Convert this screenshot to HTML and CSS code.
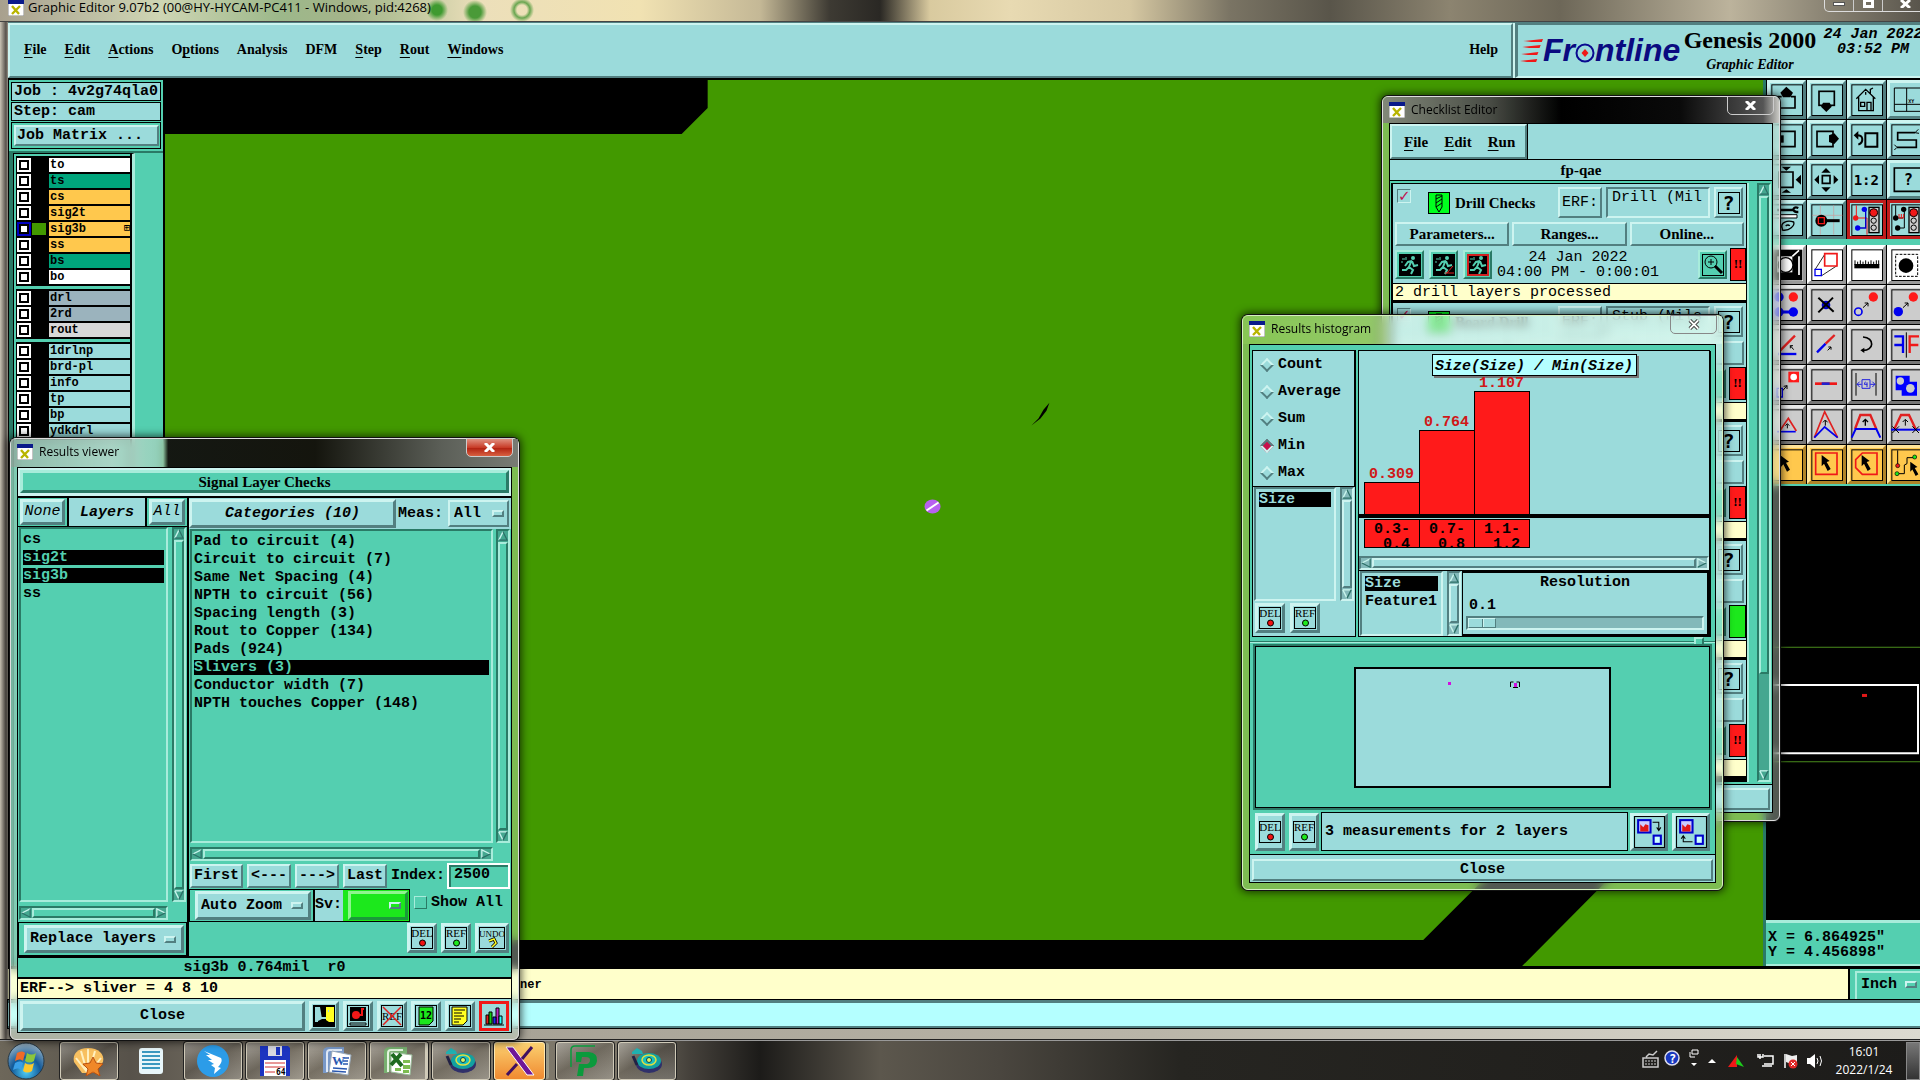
FILE: index.html
```html
<!DOCTYPE html>
<html lang="en">
<head>
<meta charset="utf-8">
<title>Graphic Editor</title>
<link rel="stylesheet" href="styles.css">
</head>
<body>
<svg class="defs" aria-hidden="true">
  <symbol id="xicon" viewBox="0 0 16 16"><rect width="16" height="16" fill="#fff" stroke="#888"/><rect width="16" height="4" fill="#0a1a8a"/><path d="M4 6l7 8M12 6l-8 8" stroke="#b8b400" stroke-width="2.4"/></symbol>
  <symbol id="up" viewBox="0 0 12 12"><path d="M6 1L1 11" stroke="#c8f4ec" stroke-width="1.6" fill="none"/><path d="M6 1l5 10H1" stroke="#2b6f66" stroke-width="1.4" fill="none"/></symbol>
  <symbol id="down" viewBox="0 0 12 12"><path d="M1 1h10" stroke="#c8f4ec" stroke-width="1.6"/><path d="M1 1l5 10" stroke="#c8f4ec" stroke-width="1.6"/><path d="M11 1L6 11" stroke="#2b6f66" stroke-width="1.6"/></symbol>
  <symbol id="left" viewBox="0 0 12 12"><path d="M11 1L1 6" stroke="#c8f4ec" stroke-width="1.6"/><path d="M1 6l10 5V1" stroke="#2b6f66" stroke-width="1.4" fill="none"/></symbol>
  <symbol id="right" viewBox="0 0 12 12"><path d="M11 6L1 1v10" stroke="#c8f4ec" stroke-width="1.6" fill="none"/><path d="M1 11l10-5" stroke="#2b6f66" stroke-width="1.6"/></symbol>
  <symbol id="del" viewBox="0 0 24 24"><rect x="1.500" y="1.500" width="21" height="21" fill="none" stroke="#000"/><circle cx="12.500" cy="17" r="3" fill="#f01010" stroke="#000"/></symbol>
  <symbol id="ref" viewBox="0 0 24 24"><rect x="1.500" y="1.500" width="21" height="21" fill="none" stroke="#000"/><circle cx="12.500" cy="17" r="3" fill="#1ce81c" stroke="#000"/></symbol>
  <symbol id="frame" viewBox="9 9 99 99"><rect x="14.500" y="14.500" width="92" height="92" fill="none" stroke="#000" stroke-width="3"/></symbol>
  <symbol id="drill" viewBox="0 0 22 22"><rect x=".5" y=".5" width="21" height="21" fill="#00ff1e" stroke="#000"/><path d="M8 3h6v12l-3 5-3-5zM8 7l6-3M8 11l6-4M8 15l6-4" fill="none" stroke="#000"/></symbol>
  <symbol id="run" viewBox="0 0 24 24"><rect x="1" y="1" width="22" height="22" fill="#000"/><circle cx="15" cy="5" r="2" fill="#54cfb0"/><path d="M14 8l-4 1-3 4M14 8l2 5 4-1M13 9l-2 5 4 3-2 4M11 14l-3 3H4" stroke="#54cfb0" stroke-width="2" fill="none"/><path d="M4 6h3M8 4v3M3 9h2" stroke="#54cfb0"/></symbol>
  <symbol id="mag" viewBox="0 0 24 24"><rect x="1.500" y="1.500" width="21" height="21" fill="none" stroke="#000"/><circle cx="10" cy="9" r="6" fill="none" stroke="#000"/><path d="M7 9h6M10 6v6" stroke="#000"/><path d="M14 13l7 7" stroke="#000" stroke-width="3"/></symbol>
  <symbol id="arrow" viewBox="0 0 40 50"><path d="M2 0l24 18-9 3 12 21-9 6-11-22-7 8z"/></symbol>
  <symbol id="eye" viewBox="0 0 32 28"><ellipse cx="18" cy="17" rx="13" ry="9" fill="#30306a"/><ellipse cx="18" cy="14" rx="12" ry="8" fill="#12a0a0"/><ellipse cx="18" cy="13" rx="7" ry="5" fill="#18c0c0" stroke="#e0e040" stroke-width="1.500"/><circle cx="18" cy="13" r="2.500" fill="#e0f060" stroke="#045"/><path d="M1 5l5-4 5 3 1 3H1z" fill="#20b0b0"/><path d="M2 9l4 9" stroke="#224" stroke-width="3"/></symbol>
</svg>

<div class="desktop">
  <main class="editor">
    <header class="titlebar">
      <svg width="16" height="16"><use href="#xicon"/></svg>
      <span>Graphic Editor 9.07b2 (00@HY-HYCAM-PC411 - Windows, pid:4268)</span>
      <div class="wctl"><button aria-label="Minimize"><i class="g-min"></i></button><button aria-label="Maximize"><i class="g-max"></i></button><button aria-label="Close window"><svg width="11" height="8" viewBox="0 0 11 8"><path d="M1 0l9 8M10 0L1 8" stroke="#fff" stroke-width="3"/></svg></button></div>
    </header>

    <div class="top">
      <nav class="menubar">
        <button><u>F</u>ile</button><button><u>E</u>dit</button><button><u>A</u>ctions</button><button>O<u>p</u>tions</button><button>Analysis</button><button>DFM</button><button><u>S</u>tep</button><button><u>R</u>out</button><button><u>W</u>indows</button>
        <button class="help">Help</button>
      </nav>
      <section class="brand">
        <div class="logo">
          <svg width="23" height="24" viewBox="0 0 20 24" preserveAspectRatio="none"><path d="M3 2l17-2-1 3H10zM2 8l16-2-1 3H8zM1 15l15-2-1 3H7zM0 22l15-2-1 3H6z" fill="#f01818"/></svg>
          <b>Fr</b><svg width="20" height="24" viewBox="0 0 20 24"><circle cx="10" cy="14" r="8.500" fill="none" stroke="#0a0a90" stroke-width="2"/><path d="M10 10l3.500 4-3.500 4-3.500-4z" fill="#f01818"/></svg><b>ntline</b>
        </div>
        <div class="product"><strong>Genesis 2000</strong><em>Graphic Editor</em></div>
        <div class="date">24 Jan 2022<br>03:52 PM</div>
      </section>
    </div>

    <div class="work">
      <aside class="layers">
        <div class="jobbox">
          <div class="cell">Job : 4v2g74qla0</div>
          <div class="cell">Step: cam</div>
          <div class="matrix"><button class="raised">Job Matrix ...</button></div>
        </div>
        <div class="layerwrap">
          <div class="layercol">
            <ul>
              <li><label><input type="checkbox"><i></i><span class="w">to</span></label></li>
              <li><label><input type="checkbox"><i></i><span class="g">ts</span></label></li>
              <li><label><input type="checkbox"><i></i><span class="o">cs</span></label></li>
              <li><label><input type="checkbox"><i></i><span class="o">sig2t</span></label></li>
              <li class="cur"><label><input type="checkbox"><i></i><span class="o">sig3b<em>⊞</em></span></label></li>
              <li><label><input type="checkbox"><i></i><span class="o">ss</span></label></li>
              <li><label><input type="checkbox"><i></i><span class="g">bs</span></label></li>
              <li><label><input type="checkbox"><i></i><span class="w">bo</span></label></li>
            </ul>
            <ul>
              <li><label><input type="checkbox"><i></i><span class="s">drl</span></label></li>
              <li><label><input type="checkbox"><i></i><span class="s">2rd</span></label></li>
              <li><label><input type="checkbox"><i></i><span class="l">rout</span></label></li>
            </ul>
            <ul>
              <li><label><input type="checkbox"><i></i><span>1drlnp</span></label></li>
              <li><label><input type="checkbox"><i></i><span>brd-pl</span></label></li>
              <li><label><input type="checkbox"><i></i><span>info</span></label></li>
              <li><label><input type="checkbox"><i></i><span>tp</span></label></li>
              <li><label><input type="checkbox"><i></i><span>bp</span></label></li>
              <li><label><input type="checkbox"><i></i><span>ydkdrl</span></label></li>
            </ul>
          </div>
        </div>
      </aside>

      <svg class="canvas" viewBox="0 0 1599 887" preserveAspectRatio="none">
        <rect width="1599" height="887" fill="#429900"/>
        <path d="M0 0h543v28l-26 26H0zM0 861h1259l98-98h124L1358 887H0z"/>
        <path d="M867 346l7-7 5-9 6-7-3 8-6 8z"/>
        <ellipse cx="768" cy="427" rx="8" ry="7" fill="#b860f0"/><path d="M762 431l12-8" stroke="#fff" stroke-width="2"/>
      </svg>

      <aside class="side">
        <div class="tools">
          <button><svg viewBox="9 9 99 99"><use href="#frame" x="9" y="9" width="99" height="99"/><path d="M34 84V50h10M72 50h12v34H34" fill="none" stroke="#000" stroke-width="5"/><path d="M58 20l20 18-8 14H48l-8-14z"/></svg></button>
          <button><svg viewBox="9 9 99 99"><use href="#frame" x="9" y="9" width="99" height="99"/><rect x="36" y="34" width="46" height="42" fill="none" stroke="#000" stroke-width="5"/><path d="M58 96L42 80l6-12h20l6 12z"/></svg></button>
          <button><svg viewBox="9 9 99 99"><use href="#frame" x="9" y="9" width="99" height="99"/><path d="M28 56l28-28 29 28M35 52v40h44V52M70 42V28l8-4M41 67h12v12H41zM60 92V67h12v25M56 36v8" fill="none" stroke="#000" stroke-width="4"/></svg></button>
          <button><svg viewBox="9 9 99 99"><path d="M22 24h90v70H22zM59 24v70M22 73h90" fill="none" stroke="#000" stroke-width="3"/><text x="64" y="68" class="ic" font-size="15">XY</text></svg></button>

          <button><svg viewBox="9 9 99 99"><use href="#frame" x="9" y="9" width="99" height="99"/><path d="M40 34h44v46H40" fill="none" stroke="#000" stroke-width="5"/><path d="M36 46h14v22H36z"/></svg></button>
          <button><svg viewBox="9 9 99 99"><use href="#frame" x="9" y="9" width="99" height="99"/><path d="M30 34h48v46H30z" fill="none" stroke="#000" stroke-width="5"/><path d="M96 56L82 72l-16-6V46l16-6z"/></svg></button>
          <button><svg viewBox="9 9 99 99"><use href="#frame" x="9" y="9" width="99" height="99"/><path d="M55 40h36v40H55zM26 46c26-4 24 22 8 28" fill="none" stroke="#000" stroke-width="6"/><path d="M20 46l14-13v26z"/></svg></button>
          <button><svg viewBox="9 9 99 99"><use href="#frame" x="9" y="9" width="99" height="99"/><path d="M84 38H32v22h56v22H30" fill="none" stroke="#000" stroke-width="5"/><path d="M84 38l10-10M84 38l12 2M30 82l-8-8M30 82l-8 8" stroke="#000" stroke-width="3"/></svg></button>

          <button><svg viewBox="9 9 99 99"><use href="#frame" x="9" y="9" width="99" height="99"/><path d="M36 36h42v46H36z" fill="none" stroke="#000" stroke-width="5"/><path d="M44 20h28L58 32zM44 98h28L58 88zM102 44v30L86 59z"/></svg></button>
          <button><svg viewBox="9 9 99 99"><use href="#frame" x="9" y="9" width="99" height="99"/><path d="M46 47h23v23H46z" fill="none" stroke="#000" stroke-width="5"/><path d="M57 24l14 14H43zM57 96l14-14H43zM22 59l14-14v28zM94 59L80 45v28z"/></svg></button>
          <button><svg viewBox="9 9 99 99"><use href="#frame" x="9" y="9" width="99" height="99"/><text x="20" y="74" class="ic" font-size="42">1:2</text></svg></button>
          <button><svg viewBox="9 9 99 99"><path d="M22 24h90v70H22z" fill="none" stroke="#000" stroke-width="5"/><text x="50" y="76" class="ic" font-size="46">?</text></svg></button>

          <button><svg viewBox="9 9 99 99"><use href="#frame" x="9" y="9" width="99" height="99"/><path d="M30 30h50M94 24c-14-6-22 8-6 12h6" fill="none" stroke="#000" stroke-width="7"/><path d="M14 44h76v10H14z" fill="#fff" stroke="#000" stroke-width="3"/><path d="M46 86c-8-20 16-26 34-20 4 10-12 28-34 24zM56 78c4-4 10-4 12 0" fill="none" stroke="#000" stroke-width="4"/></svg></button>
          <button><svg viewBox="9 9 99 99"><use href="#frame" x="9" y="9" width="99" height="99"/><path d="M40 16v88M80 16v88M16 46h90" stroke="#c99" stroke-width="2"/><circle cx="43" cy="62" r="18"/><path d="M56 62h42" stroke="#000" stroke-width="9"/><path d="M34 53h18v18H34z" fill="#000" stroke="#f01818" stroke-width="4"/></svg></button>
          <button class="redf"><svg viewBox="9 9 99 99"><use href="#frame" x="9" y="9" width="99" height="99"/><path d="M28 16v38h32v50" fill="none" stroke="#f01818" stroke-width="3"/><path d="M50 28h6v56H34" fill="none" stroke="#00c" stroke-width="4"/><circle cx="26" cy="54" r="8" fill="#f01818"/><circle cx="52" cy="28" r="8" fill="#00e"/><circle cx="32" cy="84" r="8" fill="#00e"/><rect x="66" y="22" width="30" height="76" fill="#ccc" stroke="#000" stroke-width="4"/><circle cx="80" cy="38" r="12" fill="#f01818" stroke="#000" stroke-width="3"/><circle cx="80" cy="62" r="8" fill="none" stroke="#000" stroke-width="3"/><circle cx="80" cy="83" r="8" fill="none" stroke="#000" stroke-width="3"/></svg></button>
          <button class="redf"><svg viewBox="9 9 99 99"><use href="#frame" x="9" y="9" width="99" height="99"/><path d="M26 16v38h22M36 84h16V28" fill="none" stroke="#000" stroke-width="3"/><path d="M36 42v12h14V42M43 42v12" stroke="#f01818" stroke-width="3" fill="none"/><circle cx="26" cy="54" r="8"/><circle cx="50" cy="28" r="8"/><circle cx="32" cy="84" r="8"/><rect x="66" y="22" width="30" height="76" fill="#ccc" stroke="#000" stroke-width="4"/><circle cx="80" cy="38" r="12" fill="#f01818" stroke="#000" stroke-width="3"/><circle cx="80" cy="62" r="8" fill="none" stroke="#000" stroke-width="3"/><circle cx="80" cy="83" r="8" fill="none" stroke="#000" stroke-width="3"/></svg></button>
        </div>
        <div class="tools draw">
          <button class="wh"><svg viewBox="9 9 99 99"><rect x="14" y="14" width="92" height="92"/><path d="M30 34h46v48H30z" fill="#fff"/><circle cx="56" cy="60" r="22" fill="#fff" stroke="#000" stroke-width="4"/><path d="M76 34l20-18M96 90V34" stroke="#fff" stroke-width="5"/></svg></button>
          <button class="wh"><svg viewBox="9 9 99 99"><use href="#frame" x="9" y="9" width="99" height="99"/><path d="M52 30L24 74M90 62L44 92" stroke="#000" stroke-width="2.500"/><path d="M53 26h37v37H53z" fill="#fff" stroke="#f01818" stroke-width="5"/><path d="M24 73h19v19H24z" fill="#fff" stroke="#00e" stroke-width="4"/></svg></button>
          <button class="wh"><svg viewBox="9 9 99 99"><use href="#frame" x="9" y="9" width="99" height="99"/><path d="M24 46v14M32 50v10M40 46v14M48 50v10M56 46v14M64 50v10M72 46v14M80 50v10M88 46v14M95 46v14" stroke="#000" stroke-width="3"/><path d="M22 57h75v13H22z"/></svg></button>
          <button class="wh"><svg viewBox="9 9 99 99"><use href="#frame" x="9" y="9" width="99" height="99"/><path d="M26 28h66v66H26z" fill="none" stroke="#000" stroke-width="3" stroke-dasharray="8 4"/><circle cx="57" cy="62" r="22"/></svg></button>

          <button><svg viewBox="9 9 99 99"><use href="#frame" x="9" y="9" width="99" height="99"/><circle cx="36" cy="36" r="14" fill="#00e"/><circle cx="79" cy="36" r="14" fill="#ff1a1a"/><path d="M34 81h44" stroke="#00e" stroke-width="9"/><circle cx="36" cy="81" r="14" fill="#00e"/><circle cx="79" cy="81" r="14" fill="#00e"/></svg></button>
          <button><svg viewBox="9 9 99 99"><use href="#frame" x="9" y="9" width="99" height="99"/><circle cx="57" cy="60" r="13" fill="#00c"/><path d="M34 38l46 42M78 38L34 82" stroke="#000" stroke-width="6"/></svg></button>
          <button><svg viewBox="9 9 99 99"><use href="#frame" x="9" y="9" width="99" height="99"/><circle cx="79" cy="36" r="14" fill="#ff1a1a"/><circle cx="34" cy="80" r="11" fill="none" stroke="#00e" stroke-width="5"/><path d="M48 68l15-14m-10 0h10v10" fill="none" stroke="#000" stroke-width="3"/></svg></button>
          <button><svg viewBox="9 9 99 99"><use href="#frame" x="9" y="9" width="99" height="99"/><circle cx="79" cy="36" r="14" fill="#ff1a1a"/><circle cx="34" cy="80" r="14" fill="#00e"/><path d="M48 68l15-14m-10 0h10v10" fill="none" stroke="#000" stroke-width="3"/></svg></button>

          <button><svg viewBox="9 9 99 99"><use href="#frame" x="9" y="9" width="99" height="99"/><path d="M40 76l44-44" stroke="#e02020" stroke-width="7"/><path d="M34 87h54" stroke="#00e" stroke-width="7"/><path d="M80 74L70 62m0 8v-8h8" fill="none" stroke="#000" stroke-width="3"/></svg></button>
          <button><svg viewBox="9 9 99 99"><use href="#frame" x="9" y="9" width="99" height="99"/><path d="M30 82l26-26" stroke="#00e" stroke-width="7"/><path d="M56 56l27-26" stroke="#e02020" stroke-width="7"/><path d="M62 76l10-10m-8 0h8v8" fill="none" stroke="#000" stroke-width="3"/></svg></button>
          <button><svg viewBox="9 9 99 99"><use href="#frame" x="9" y="9" width="99" height="99"/><path d="M48 36c36 2 34 42-2 40" fill="none" stroke="#000" stroke-width="5"/><path d="M40 76l12-8v16z"/></svg></button>
          <button><svg viewBox="9 9 99 99"><use href="#frame" x="9" y="9" width="99" height="99"/><path d="M22 34h26v50M22 60h26" fill="none" stroke="#00e" stroke-width="7"/><path d="M96 34H68v50M68 60h26" fill="none" stroke="#f01818" stroke-width="7"/><path d="M58 22v76" stroke="#000" stroke-width="3"/></svg></button>

          <button><svg viewBox="9 9 99 99"><use href="#frame" x="9" y="9" width="99" height="99"/><rect x="64" y="20" width="32" height="32" fill="#ff1a1a"/><circle cx="80" cy="36" r="10" fill="#fff"/><path d="M46 78l14-16m-10 2l10-2v10" fill="none" stroke="#000" stroke-width="3"/><path d="M30 70h16v26H30z" fill="none" stroke="#00e" stroke-width="4"/></svg></button>
          <button><svg viewBox="9 9 99 99"><use href="#frame" x="9" y="9" width="99" height="99"/><path d="M24 56h66" stroke="#f01818" stroke-width="8"/><path d="M44 56h24" stroke="#22c" stroke-width="8"/></svg></button>
          <button><svg viewBox="9 9 99 99"><use href="#frame" x="9" y="9" width="99" height="99"/><path d="M27 24v68M87 24v68" stroke="#000" stroke-width="3"/><path d="M45 44h24v26H45zM30 58h14M84 58H70M38 50l-8 8 8 8M76 50l8 8-8 8M55 50l-3 8h9M60 52v14" fill="none" stroke="#22d" stroke-width="3"/></svg></button>
          <button><svg viewBox="9 9 99 99"><use href="#frame" x="9" y="9" width="99" height="99"/><path d="M26 32h42v18h22v42H44V76H26z" fill="#00f"/><circle cx="40" cy="48" r="11" fill="#ccc"/><circle cx="70" cy="70" r="13" fill="#ccc"/></svg></button>

          <button><svg viewBox="9 9 99 99"><use href="#frame" x="9" y="9" width="99" height="99"/><path d="M38 78l26-38 24 38" fill="none" stroke="#e02020" stroke-width="5"/><path d="M30 80h56" stroke="#00e" stroke-width="5"/><path d="M61 70V58m-6 4l6-6 6 6" fill="none" stroke="#000" stroke-width="3"/></svg></button>
          <button><svg viewBox="9 9 99 99"><use href="#frame" x="9" y="9" width="99" height="99"/><path d="M22 98l31-78 39 78" fill="none" stroke="#e02020" stroke-width="5"/><path d="M22 98l31-32 39 32" fill="none" stroke="#00e" stroke-width="5"/><path d="M55 62V46m-7 6l7-7 7 7" fill="none" stroke="#000" stroke-width="3"/></svg></button>
          <button><svg viewBox="9 9 99 99"><use href="#frame" x="9" y="9" width="99" height="99"/><path d="M24 72l16-42h30l18 42" fill="none" stroke="#e02020" stroke-width="7"/><path d="M14 98l12-26h62l12 26" fill="none" stroke="#00e" stroke-width="6"/><path d="M55 62V44m-8 7l8-8 8 8" fill="none" stroke="#000" stroke-width="4"/></svg></button>
          <button><svg viewBox="9 9 99 99"><use href="#frame" x="9" y="9" width="99" height="99"/><path d="M22 72l20-42h24l20 42" fill="none" stroke="#e02020" stroke-width="7"/><path d="M12 74h96" stroke="#00e" stroke-width="6"/><path d="M55 62V44m-8 7l8-8 8 8M16 64l20 20M36 64L16 84M76 64l20 20M96 64L76 84" fill="none" stroke="#000" stroke-width="3"/></svg></button>

          <button class="or"><svg viewBox="9 9 99 99"><use href="#frame" x="9" y="9" width="99" height="99"/><use href="#arrow" x="40" y="32" width="40" height="50"/></svg></button>
          <button class="or"><svg viewBox="9 9 99 99"><use href="#frame" x="9" y="9" width="99" height="99"/><path d="M26 24h64v64H26z" fill="none" stroke="#f01818" stroke-width="5"/><use href="#arrow" x="42" y="30" width="40" height="50"/></svg></button>
          <button class="or"><svg viewBox="9 9 99 99"><use href="#frame" x="9" y="9" width="99" height="99"/><path d="M46 24h44v64H46L26 68V44z" fill="none" stroke="#f01818" stroke-width="5"/><use href="#arrow" x="42" y="30" width="40" height="50"/></svg></button>
          <button class="or"><svg viewBox="9 9 99 99"><use href="#frame" x="9" y="9" width="99" height="99"/><path d="M32 16v44M34 86h18V60l8-4V38h20" fill="none" stroke="#000" stroke-width="3"/><circle cx="32" cy="62" r="6" fill="#f01818" stroke="#000" stroke-width="2"/><circle cx="30" cy="86" r="6" fill="#1ce81c" stroke="#000" stroke-width="2"/><circle cx="83" cy="36" r="6" fill="#1ce81c" stroke="#000" stroke-width="2"/><use href="#arrow" x="68" y="50" width="36" height="45"/></svg></button>
        </div>
        <svg class="over" viewBox="0 0 154 432" preserveAspectRatio="none"><rect width="154" height="432"/><path d="M0 160.500h154M0 274.500h154" stroke="#4a8a1c"/><path d="M0 198h152v68H0" fill="none" stroke="#fff" stroke-width="2"/><path d="M96 207h5v3h-5z" fill="#e01818"/></svg>
        <div class="coords">X = 6.864925"<br>Y = 4.456898"</div>
      </aside>
    </div>
    <div class="msg"><span>ner</span><label class="inch"><select aria-label="Units"><option>Inch</option></select><i class="ind"></i></label></div>
    <div class="strip"></div>
  </main>

  <footer class="taskbar">
    <button class="start" aria-label="Start"><svg width="38" height="38" viewBox="0 0 38 38"><defs><radialGradient id="orb" cx=".5" cy=".8" r=".8"><stop offset="0" stop-color="#4fd0f8"/><stop offset=".5" stop-color="#135a9a"/><stop offset="1" stop-color="#9fb8c8"/></radialGradient></defs><circle cx="19" cy="19" r="18" fill="url(#orb)" stroke="#263845"/><path d="M10 11c3-2 6-2 8 0l-2 8c-2-2-5-2-8 0z" fill="#f06a28"/><path d="M20 11c3 2 6 2 9 0l-2 8c-3 2-6 2-9 0z" fill="#8cc63c"/><path d="M8 21c3-2 6-2 8 0l-2 7c-2-2-5-2-8 0z" fill="#3aa0e8"/><path d="M18 21c3 2 6 2 9 0l-2 8c-3 2-6 2-9 0z" fill="#fcc82c"/></svg></button>
    <button class="tb" aria-label="Shell"><svg width="34" height="30" viewBox="0 0 34 30"><path d="M10 27L2 16C0 8 6 2 16 2s17 6 15 14l-9 11z" fill="#f8c060"/><path d="M15 26L4 12M15 26L9 5M16 26V3M17 26l6-21M18 26l11-14" stroke="#fff0c0" stroke-width="2"/><path d="M21 11l3 6 7 1-5 5 2 7-7-4-7 4 2-7-5-5 7-1z" fill="#f08828" stroke="#b85010"/></svg></button>
    <button class="tb flat" aria-label="Notes"><svg width="26" height="28" viewBox="0 0 26 28"><rect x="1" y="1" width="24" height="26" rx="3" fill="#e8f6fa"/><path d="M4 5h18M4 9h18M4 13h18M4 17h18M4 21h18" stroke="#3a98c0" stroke-width="2"/></svg></button>
    <button class="tb" aria-label="Messenger"><svg width="32" height="32" viewBox="0 0 32 32"><circle cx="16" cy="16" r="16" fill="#2c9ce8"/><path d="M7 6l17 7c2 3-1 7-3 9l3 1-7 6 1-6-4-3 3-1-6-4 4 0-6-5 4 0z" fill="#fff"/></svg></button>
    <button class="tb" aria-label="Save tool"><svg width="32" height="32" viewBox="0 0 32 32"><path d="M1 1h28l2 2v28H1z" fill="#1c34c0"/><path d="M9 1h14v10H9z" fill="#d8d8e0"/><path d="M17 2h4v8h-4z" fill="#1c34c0"/><path d="M5 15h22v16H5z" fill="#fff"/><path d="M6 18h20M6 22h20M6 27h10" stroke="#d03030"/><text x="17" y="30" class="ic" font-size="8">64</text></svg></button>
    <button class="tb" aria-label="Word"><svg width="30" height="30" viewBox="0 0 30 30"><path d="M1 27V6q0-5 6-5h15v6L5 27z" fill="#7898c8"/><path d="M5 26V7q0-3 3-3h12" stroke="#dfe9f6" fill="none" stroke-width="2"/><path d="M10 5l19 4-3 20-19-3z" fill="#fff" stroke="#9ab"/><text x="10" y="19" class="wd">W</text><path d="M22 12h5M21 15h5M21 18h5M11 22l14 1M10 25l14 1" stroke="#2a58b0" stroke-width="1.500"/></svg></button>
    <button class="tb stack" aria-label="Excel"><svg width="30" height="30" viewBox="0 0 30 30"><path d="M1 27V6q0-5 6-5h17v6L5 27z" fill="#78b070"/><path d="M5 26V7q0-3 3-3h12" stroke="#e4f4e0" fill="none" stroke-width="2"/><path d="M8 6l21 3-2 20-19-3z" fill="#fff" stroke="#9b9"/><path d="M9 8l10 12M18 8L8 19" stroke="#1e6a20" stroke-width="4"/><path d="M20 14h7v3h-7zM20 19h7v4h-7zM12 22h6v3h-6zM20 24h6v3h-6z" fill="#7cbc50"/></svg></button>
    <button class="tb" aria-label="Genesis"><svg width="32" height="28"><use href="#eye"/></svg></button>
    <button class="tb hot" aria-label="X server"><svg width="34" height="32" viewBox="0 0 34 32"><path d="M3 2h7l21 28h-7z" fill="#701898" stroke="#fff"/><path d="M29 2L19 14M14 19L4 30" stroke="#401060" stroke-width="3"/></svg></button>
    <button class="tb" aria-label="PCB"><svg width="34" height="32" viewBox="0 0 34 32"><path d="M3 22V5q0-4 4-4h20" fill="none" stroke="#0a9a3c" stroke-width="1.500"/><path d="M8 7h13q9 1 8 9-1 7-9 7h-4l-1 8H9l2-12h8q3-1 3-4t-4-3h-4l-1 5H8z" fill="#0a9a3c"/></svg></button>
    <button class="tb" aria-label="Genesis 2"><svg width="32" height="28"><use href="#eye"/></svg></button>
    <div class="tray">
      <svg width="180" height="30" viewBox="0 0 180 30">
        <path d="M1 12h15v9H1zM4 11l3-3 4 1 4-4" fill="none" stroke="#ccc" stroke-width="1.500"/><path d="M3 15h11M3 18h11" stroke="#ccc" stroke-dasharray="2 1"/>
        <circle cx="30" cy="12" r="7" fill="#1838c0" stroke="#dde" stroke-width="1.500"/><text x="27" y="17" class="ic" font-size="12" fill="#fff">?</text>
        <path d="M50 4h6v4h-6zM48 6v5h5" fill="none" stroke="#fff"/><path d="M49 17h6l-3 3zM66 17h8l-4-4z" fill="#fff"/>
        <path d="M86 21h9V9z" fill="#f01818"/><path d="M95 11l7 10-8-3z" fill="#1ccc1c"/>
        <path d="M122 10h9v8h-9M120 20h10M118 8v5M116 8v3h5V8" fill="none" stroke="#fff" stroke-width="1.500"/>
        <path d="M143 8v14" stroke="#fff" stroke-width="1.500"/><path d="M144 8l6 2 5-1v8l-6 1-5-2z" fill="#eee"/><circle cx="151" cy="18" r="4.500" fill="#e02828"/><path d="M149 16l4 4M153 16l-4 4" stroke="#fff"/>
        <path d="M165 12h3l5-4v14l-5-4h-3z" fill="#fff"/><path d="M175 12q2 3 0 6M178 10q3 5 0 10" fill="none" stroke="#fff"/>
      </svg>
      <time>16:01<br>2022/1/24</time>
      <button class="peek" aria-label="Show desktop"></button>
    </div>
  </footer>

  <!-- Checklist editor window -->
  <section class="win checklist">
    <header><svg width="16" height="16"><use href="#xicon"/></svg><span>Checklist Editor</span><button class="x" aria-label="Close Checklist Editor"><svg width="11" height="9" viewBox="0 0 11 9"><path d="M1 0l9 9M10 0L1 9" stroke="#fff" stroke-width="3"/></svg></button></header>
    <div class="client">
      <nav class="cmenu"><div class="raised"><button><u>F</u>ile</button><button><u>E</u>dit</button><button><u>R</u>un</button></div></nav>
      <h2>fp-qae</h2>
      <div class="cscroll">
        <div class="items">
          <article>
            <div class="r1"><input type="checkbox" checked aria-label="Drill Checks enabled"><svg width="22" height="22"><use href="#drill"/></svg><strong>Drill Checks</strong><button class="raised">ERF:</button><input class="sunk" value="Drill (Mil" aria-label="ERF model"><button class="raised q"><b>?</b></button></div>
            <div class="r2"><button class="raised">Parameters...</button><button class="raised">Ranges...</button><button class="raised">Online...</button></div>
            <div class="r3"><button class="raised t"><svg><use href="#run"/></svg></button><button class="raised t"><svg viewBox="0 0 24 24"><use href="#run"/><path d="M15 20l6-7M13 20h9" stroke="#e02020"/></svg></button><button class="raised t rd"><svg><use href="#run"/></svg></button><p>24 Jan 2022<br>04:00 PM - 0:00:01</p><button class="raised t"><svg><use href="#mag"/></svg></button><b class="st">!!</b></div>
            <div class="r4">2 drill layers processed</div>
          </article>
          <article>
            <div class="r1"><input type="checkbox" checked aria-label="Board Drill Checks enabled"><svg width="22" height="22"><use href="#drill"/></svg><strong>Board Drill Checks</strong><button class="raised">ERF:</button><input class="sunk" value="Stub (Mils)" aria-label="ERF model"><button class="raised q"><b>?</b></button></div>
            <div class="r2"><button class="raised"></button><button class="raised"></button><button class="raised"></button></div>
            <div class="r3"><p></p><button class="raised t"></button><b class="st">!!</b></div>
            <div class="r4"></div>
          </article>
          <article>
            <div class="r1"><strong></strong><button class="raised q"><b>?</b></button></div>
            <div class="r2"><button class="raised"></button><button class="raised"></button><button class="raised"></button></div>
            <div class="r3"><p></p><button class="raised t"></button><b class="st">!!</b></div>
            <div class="r4"></div>
          </article>
          <article>
            <div class="r1"><strong></strong><button class="raised q"><b>?</b></button></div>
            <div class="r2"><button class="raised"></button><button class="raised"></button><button class="raised"></button></div>
            <div class="r3"><p></p><button class="raised t"></button><b class="st ok"></b></div>
            <div class="r4"></div>
          </article>
          <article>
            <div class="r1"><strong></strong><button class="raised q"><b>?</b></button></div>
            <div class="r2"><button class="raised"></button><button class="raised"></button><button class="raised"></button></div>
            <div class="r3"><p></p><button class="raised t"></button><b class="st">!!</b></div>
            <div class="r4"></div>
          </article>
        </div>
        <div class="vs teal part"><svg><use href="#up"/></svg><i></i><s></s><svg><use href="#down"/></svg></div>
      </div>
      <div class="closebar"><button class="raised" aria-label="Close checklist"></button></div>
    </div>
  </section>

  <!-- Results histogram window -->
  <section class="win histo">
    <header><svg width="16" height="16"><use href="#xicon"/></svg><span>Results histogram</span><button class="x" aria-label="Close Results histogram"><svg width="12" height="11" viewBox="-1 -1 13 11"><path d="M1 0l9 9M10 0L1 9" stroke="#444" stroke-width="4"/><path d="M1 0l9 9M10 0L1 9" stroke="#fff" stroke-width="2"/></svg></button></header>
    <div class="client">
      <div class="hmain">
        <div class="hleft">
          <fieldset>
            <label><input type="radio" name="stat">Count</label>
            <label><input type="radio" name="stat">Average</label>
            <label><input type="radio" name="stat">Sum</label>
            <label><input type="radio" name="stat" checked>Min</label>
            <label><input type="radio" name="stat">Max</label>
          </fieldset>
          <div class="hlist">
            <ul class="list cy"><li class="sel">Size</li></ul>
            <div class="vs"><svg><use href="#up"/></svg><i></i><svg><use href="#down"/></svg></div>
          </div>
          <div class="btns"><button class="raised ib"><svg viewBox="0 0 24 24"><use href="#del"/><text x="12" y="11" class="tiny">DEL</text></svg></button><button class="raised ib"><svg viewBox="0 0 24 24"><use href="#ref"/><text x="12" y="11" class="tiny">REF</text></svg></button></div>
        </div>
        <div class="hright">
          <h3>Size(Size) / Min(Size)</h3>
          <div class="bars">
            <div><span>0.309</span><i style="height:32px"></i></div>
            <div><span>0.764</span><i style="height:84px"></i></div>
            <div><span>1.107</span><i style="height:123px"></i></div>
          </div>
          <div class="axis"><span>0.3-<br>&nbsp;0.4</span><span>0.7-<br>&nbsp;0.8</span><span>1.1-<br>&nbsp;1.2</span></div>
          <div class="hs"><svg><use href="#left"/></svg><i></i><svg><use href="#right"/></svg></div>
          <div class="hlow">
            <ul class="list cy"><li class="sel">Size</li><li>Feature1</li></ul>
            <div class="vs"><svg><use href="#up"/></svg><i></i><svg><use href="#down"/></svg></div>
            <div class="reso"><label for="reso">Resolution</label><output>0.1</output><input id="reso" type="range" min="0" max="10" value="0"></div>
          </div>
        </div>
      </div>
      <div class="sash"><i></i></div>
      <div class="map"><svg viewBox="0 0 257 121"><rect x="1" y="1" width="255" height="119" fill="#9bdbdb" stroke="#000" stroke-width="2"/><path d="M94 15h3v3h-3zM160 16h3v4h-3z" fill="#d010e0"/><path d="M156.500 20v-5h3M165.500 20v-5h-3M159 20.500h5" fill="none" stroke="#000"/></svg></div>
      <div class="hfoot">
        <button class="raised ib"><svg viewBox="0 0 24 24"><use href="#del"/><text x="12" y="11" class="tiny">DEL</text></svg></button><button class="raised ib"><svg viewBox="0 0 24 24"><use href="#ref"/><text x="12" y="11" class="tiny">REF</text></svg></button>
        <div class="info">3 measurements for 2 layers</div>
        <button class="raised pic" aria-label="Send to layer"><svg viewBox="0 0 30 31"><rect x=".5" y=".5" width="29" height="30" fill="none" stroke="#000"/><rect x="4" y="4" width="12" height="12" fill="#ccf" stroke="#00c" stroke-width="2"/><path d="M6 8l3 3 2-3 3 1v6H6z" fill="#e01818"/><path d="M18 6h6v8m-2-3l2 3 2-3" fill="none" stroke="#000"/><rect x="19" y="19" width="7" height="8" fill="#cff" stroke="#00c" stroke-width="2"/></svg></button>
        <button class="raised pic" aria-label="Read from layer"><svg viewBox="0 0 30 31"><rect x=".5" y=".5" width="29" height="30" fill="none" stroke="#000"/><rect x="4" y="4" width="12" height="12" fill="#ccf" stroke="#00c" stroke-width="2"/><path d="M6 8l3 3 2-3 3 1v6H6z" fill="#e01818"/><path d="M16 25H7v-6m-2 3l2-3 2 3" fill="none" stroke="#000"/><rect x="19" y="19" width="7" height="8" fill="#cff" stroke="#00c" stroke-width="2"/></svg></button>
      </div>
      <div class="closebar"><button class="raised">Close</button></div>
    </div>
  </section>

  <!-- Results viewer window -->
  <section class="win viewer">
    <header><svg width="16" height="16"><use href="#xicon"/></svg><span>Results viewer</span><button class="x red" aria-label="Close Results viewer"><svg width="11" height="9" viewBox="0 0 11 9"><path d="M1 0l9 9M10 0L1 9" stroke="#fff" stroke-width="3"/></svg></button></header>
    <div class="client">
      <div class="vtitle"><button class="raised t">Signal Layer Checks</button></div>
      <div class="vbody">
        <div class="vleft">
          <div class="vhead"><button class="raised thin">None</button><em>Layers</em><button class="raised thin">All</button></div>
          <div class="two">
            <div class="stackcol"><ul class="list"><li>cs</li><li class="sel">sig2t</li><li class="sel">sig3b</li><li>ss</li></ul>
            <div class="hs teal"><svg><use href="#left"/></svg><i></i><svg><use href="#right"/></svg></div></div>
            <div class="vs teal"><svg><use href="#up"/></svg><i></i><svg><use href="#down"/></svg></div>
          </div>
          <div class="repl"><label class="raised opt"><select aria-label="Layer mode"><option>Replace layers</option></select><i class="ind"></i></label></div>
        </div>
        <div class="vright">
          <div class="chead"><button class="raised"><em>Categories (10)</em></button><label for="meas">Meas:</label><span class="raised opt"><select id="meas"><option>All</option></select><i class="ind"></i></span></div>
          <div class="two">
            <div class="stackcol"><ul class="list"><li>Pad to circuit (4)</li><li>Circuit to circuit (7)</li><li>Same Net Spacing (4)</li><li>NPTH to circuit (56)</li><li>Spacing length (3)</li><li>Rout to Copper (134)</li><li>Pads (924)</li><li class="sel">Slivers (3)</li><li>Conductor width (7)</li><li>NPTH touches Copper (148)</li></ul>
            <div class="hs teal"><svg><use href="#left"/></svg><i></i><svg><use href="#right"/></svg></div></div>
            <div class="vs teal"><svg><use href="#up"/></svg><i></i><svg><use href="#down"/></svg></div>
          </div>
          <div class="nav"><button class="raised">First</button><button class="raised">&lt;---</button><button class="raised">---&gt;</button><button class="raised">Last</button><label for="idx">Index:</label><input id="idx" value="2500"></div>
          <div class="zoomrow">
            <div class="az"><label class="raised opt"><select aria-label="Zoom mode"><option>Auto Zoom</option></select><i class="ind"></i></label></div>
            <div class="sv"><label for="sv">Sv:</label><span class="opt raised"><select id="sv"><option></option></select><i class="ind"></i></span></div>
            <label class="show"><input type="checkbox">Show All</label>
          </div>
          <div class="btns end"><button class="raised ib"><svg viewBox="0 0 24 24"><use href="#del"/><text x="12" y="11" class="tiny">DEL</text></svg></button><button class="raised ib"><svg viewBox="0 0 24 24"><use href="#ref"/><text x="12" y="11" class="tiny">REF</text></svg></button><button class="raised ib wide"><svg viewBox="0 0 28 24"><rect x="1.500" y="1.500" width="25" height="21" fill="none" stroke="#000"/><text x="14" y="11" class="tiny undo">UNDO</text><path d="M11 15l5-2 2 4-4 4" fill="none" stroke="#000" stroke-width="3"/><path d="M11 15l5-2 2 4-4 4" fill="none" stroke="#ff2" stroke-width="1.500"/></svg></button></div>
        </div>
      </div>
      <div class="stat">sig3b 0.764mil&nbsp; r0</div>
      <div class="erf">ERF--&gt; sliver = 4 8 10</div>
      <div class="vfoot">
        <button class="raised cl">Close</button>
        <button class="raised ib" aria-label="Contrast"><svg viewBox="0 0 24 24"><rect x="1" y="1" width="22" height="22" fill="#000"/><path d="M3 3h5l2 12-4 2v1H3z" fill="#9bdbdb"/><path d="M14 3h8v15h-5l-3-2z" fill="#ff2"/><path d="M7 7h1M16 7h1M9 14h5" stroke="#9bdbdb" stroke-width="2"/></svg></button>
        <button class="raised ib" aria-label="Snapshot"><svg viewBox="0 0 24 24"><rect x="1.500" y="1.500" width="21" height="21" fill="none" stroke="#000"/><path d="M4 3h16v14H4z"/><path d="M4 19h16v2H4z" fill="none" stroke="#000"/><circle cx="10" cy="11" r="4" fill="#f01818"/><path d="M10 11h6V5h2" stroke="#f01818" stroke-width="2" fill="none"/></svg></button>
        <button class="raised ib" aria-label="No reference"><svg viewBox="0 0 24 24"><rect x="1.500" y="1.500" width="21" height="21" fill="none" stroke="#000"/><text x="12" y="16" class="tiny">REF</text><path d="M3 3l18 18M21 3L3 21" stroke="#e02020" stroke-width="1.500"/></svg></button>
        <button class="raised ib" aria-label="Numbers"><svg viewBox="0 0 24 24"><rect x="1.500" y="1.500" width="21" height="21" fill="none" stroke="#000"/><path d="M5 3h14v14l-4 4H5z" fill="#1ce81c" stroke="#000"/><text x="6" y="15" class="ic" font-size="10">12</text></svg></button>
        <button class="raised ib" aria-label="Report"><svg viewBox="0 0 24 24"><rect x="1.500" y="1.500" width="21" height="21" fill="none" stroke="#000"/><path d="M4 3h15v14l-4 4H4z" fill="#ff2" stroke="#000"/><path d="M6 6h11M6 9h8M6 12h10M6 15h7M6 18h5" stroke="#000"/></svg></button>
        <button class="raised ib hotb" aria-label="Histogram"><svg viewBox="0 0 24 24"><path d="M2 2h20v20H2z" fill="#9bdbdb"/><path d="M4 20v-9h3v9z" fill="#e02020" stroke="#000"/><path d="M14 20V4h3v16z" fill="#c020c0" stroke="#000"/><path d="M7 20V8h3v12z" fill="#1c1" stroke="#000"/><path d="M11 20v-7h3v7z" fill="#22e" stroke="#000"/><path d="M17 20v-8h3v8z" fill="#2ff" stroke="#000"/><path d="M2 21h20" stroke="#000"/></svg></button>
      </div>
    </div>
  </section>
</div>
</body>
</html>
```
FILE: styles.css
```css
:root {
  --cy: #9bdbdb; --cyl: #cdf4f0; --cyd: #527f80;
  --te: #54cfb0; --tel: #a8ecdb; --ted: #2a7a66;
  --cream: #ffffcb; --green: #1ce81c; --red: #ff1a1a;
  --mono: "Liberation Mono", monospace;
  --serif: "Liberation Serif", serif;
  --ui: "Open Sans", sans-serif;
}
* { box-sizing: border-box; }
body { margin: 0; overflow: hidden; font: bold 15px/18px var(--mono); color: #000; }
button, select, input { font: inherit; color: inherit; background: none; border: 0; padding: 0; margin: 0; border-radius: 0; appearance: none; outline: none; }
button { display: flex; align-items: center; justify-content: center; white-space: pre; flex: none; }
ul { list-style: none; margin: 0; padding: 0; }
h2, h3, p { margin: 0; font-size: inherit; }
svg { display: block; flex: none; }
.defs { position: absolute; width: 0; height: 0; }
.tiny { font: 11px var(--serif); text-anchor: middle; }
.undo { font-size: 9px; }
.ic { font-family: "DejaVu Sans Mono", monospace; font-weight: bold; }
.wd { font: bold 13px var(--serif); fill: #2a58b0; }

.desktop { position: relative; height: 100vh; display: flex; flex-direction: column; overflow: hidden; background: #6e6758; }
.raised { background: var(--cy); border: 3px solid; border-color: var(--cyl) var(--cyd) var(--cyd) var(--cyl); }
.raised.t { background: var(--te); border-color: var(--tel) var(--ted) var(--ted) var(--tel); }

/* main window */
.editor { flex: 1; min-height: 0; display: flex; flex-direction: column; padding: 0 0 12px 8px; background: linear-gradient(90deg, #c9c3b4, #55504a 6px, #9a9488 8px, #b9b5a8 60%, #dcdad0); }
.titlebar { flex: none; height: 22px; display: flex; align-items: flex-start; gap: 4px; margin-left: -8px; padding-left: 8px; font: 13px/15px var(--ui); font-weight: 400;
  background: radial-gradient(circle at 437px 10px, #3f9a30 5px, transparent 11px), radial-gradient(circle at 475px 12px, #4a9a38 6px, transparent 12px), radial-gradient(circle at 522px 10px, transparent 5px, #6aa650 8px, transparent 12px), linear-gradient(90deg, #a8a08e, #cfd6b4 160px, #9cb88a 280px, #a5b48a 350px, #b9c49a 400px, #ecdfba 480px, #f1e2b2 640px, #c4b896 760px, #3d3a33 830px, #2a2824 880px, #d9ca9f 930px, #e8dab2 1010px, #d6c8a2 1130px, #7a7464 1230px, #59554a 1330px, #8c8470 1450px, #6d6758 1560px, #bcb39c 1730px, #59554c 100%); border-bottom: 1px solid #444; }
.wctl { margin-left: auto; display: flex; height: 12px; margin-right: -30px; border: 1px solid #ddd; border-top: 0; border-radius: 0 0 5px 5px; }
.wctl button { width: 29px; border-right: 1px solid #ccc; padding-bottom: 4px; }
.wctl button:last-child { width: 66px; padding-right: 20px; }
.g-min { width: 12px; height: 4px; background: #fff; border: 1px solid #555; }
.g-max { width: 11px; height: 9px; border: 3px solid #fff; }
.top { flex: none; height: 56px; display: flex; background: var(--cyl); border-top: 1px solid var(--cyd); }
.menubar { flex: 1; display: flex; align-items: center; gap: 18px; padding: 0 13px 2px 14px; background: var(--cy); border: 2px solid; border-color: var(--cyl) var(--cyd) var(--cyd) var(--cyl); font: bold 14px/20px var(--serif); }
.help { margin-left: auto; }
u { text-underline-offset: 3px; }
.brand { width: 405px; flex: none; margin-left: 2px; display: flex; padding-left: 2px; background: var(--cy); border-left: 3px solid var(--cyd); border-top: 2px solid var(--cyd); border-bottom: 2px solid var(--cyl); overflow: hidden; }
.logo { display: flex; align-items: center; height: 50px; font: italic bold 32px/34px "Liberation Sans", sans-serif; color: #0a0a80; width: 160px; flex: none; }
.logo svg { margin-top: 2px; }
.product { display: flex; flex-direction: column; align-items: center; font: bold 24px/30px var(--serif); width: 136px; margin-left: 2px; flex: none; }
.product em { font-size: 14px; line-height: 20px; }
.date { flex: none; font-style: italic; text-align: center; line-height: 15px; padding-top: 2px; margin-left: 4px; width: 102px; }
.work { flex: 1; min-height: 0; display: flex; border-top: 2px solid #000; }
.canvas { flex: 1; width: 0; height: 100%; }
.layers { width: 157px; flex: none; background: var(--te); border-right: 2px solid #000; border-left: 1px solid #000; display: flex; flex-direction: column; overflow: hidden; }
.jobbox { padding: 2px 2px; border-bottom: 2px solid var(--ted); }
.cell { height: 19px; margin-bottom: 1px; padding-left: 2px; background: var(--cy); border: 1px solid #000; white-space: pre; line-height: 17px; }
.matrix { border: 1px solid #000; margin-top: 1px; padding: 2px; }
.matrix .raised { width: 145px; height: 21px; justify-content: flex-start; padding-left: 1px; border-width: 2px; }
.layerwrap { flex: 1; display: flex; background: var(--te); border-left: 4px solid var(--ted); }
.layercol { width: 122px; height: 100%; padding: 2px 3px 0 2px; border: 1px solid #000; border-right: 3px solid var(--tel); border-bottom: 0; box-shadow: inset -2px 0 0 #000; }
.layercol ul { background: #000; padding: 1px; margin-bottom: 3px; width: 115px; }
.layercol li { height: 16px; font-size: 12px; line-height: 14px; }
.layercol label { display: flex; height: 16px; padding: 1px 0; }
.layercol input { width: 14px; height: 14px; border: 2px solid #fff; background: #000; flex: none; }
.layercol input::after { content: ""; display: block; margin: 2px; width: 6px; height: 6px; background: #fff; }
.layercol i { width: 18px; border: 1px solid #000; border-right-width: 3px; }
.layercol span { flex: 1; padding-left: 1px; background: var(--cy); display: flex; justify-content: space-between; }
.layercol em { font-style: normal; font-size: 10px; }
.layercol .w { background: #fff; } .layercol .g { background: #00a57c; } .layercol .o { background: #ffc84d; } .layercol .s { background: #9bb3bd; } .layercol .l { background: #d8d8d8; }
.cur input { border-color: #0000c0; } .cur i { background: #429900; }

.side { width: 157px; flex: none; display: flex; flex-direction: column; background: var(--te); border-left: 3px solid var(--ted); }
.tools { display: grid; grid-template-columns: repeat(4, 39px); gap: 1px; background: #000; width: 161px; padding-left: 1px; flex: none; }
.tools button { height: 39px; background: var(--cy); border: 3px solid; border-color: var(--cyl) var(--cyd) var(--cyd) var(--cyl); }
.tools svg { width: 33px; height: 33px; }
.tools .redf { border-color: #c01c1c; }
.draw { margin-top: 6px; }
.draw button { background: #ccc; border-color: #e8e8e8 #777 #777 #e8e8e8; }
.draw .wh { background: #fff; border-color: #fff #999 #999 #fff; }
.draw .or { background: #ffc84d; border-color: #ffe49a #b08428 #b08428 #ffe49a; }
.over { flex: 1; min-height: 0; width: 100%; margin-top: 2px; }
.coords { flex: none; height: 46px; padding: 7px 2px 0; line-height: 15px; border-top: 3px solid var(--tel); border-bottom: 2px solid var(--tel); white-space: pre; }
.msg { flex: none; height: 34px; display: flex; align-items: center; background: var(--cream); border-top: 3px solid #000; padding-left: 512px; font-size: 12px; }
.inch { margin-left: auto; align-self: stretch; width: 72px; background: var(--te); border-left: 2px solid #000; display: flex; align-items: center; font-size: 15px; padding-left: 11px; box-shadow: inset 5px 2px 0 var(--te), inset 7px 4px 0 var(--tel); }
.inch select { width: 44px; }
.strip { flex: none; height: 28px; background: #b4ffff; border-top: 3px solid var(--cyd); border-bottom: 2px solid var(--cyd); outline: 1px solid #000; }
.ind { flex: none; width: 12px; height: 7px; border: 2px solid; border-color: var(--cyl) var(--cyd) var(--cyd) var(--cyl); }

/* floating windows */
.win { position: absolute; display: flex; flex-direction: column; border: 1px solid #ddd; border-radius: 6px; padding: 0 6px 7px; box-shadow: 0 0 8px 2px rgba(0, 0, 0, .7), 0 0 0 1px #222; backdrop-filter: blur(5px); background: rgba(235, 255, 235, .35); }
.win > header { flex: none; height: 28px; display: flex; gap: 6px; padding: 6px 0 0 1px; font: 12px/16px var(--ui); position: relative; }
.x { position: absolute; right: 0; top: -1px; width: 47px; height: 19px; border: 1px solid #ccc; border-radius: 0 0 5px 5px; }
.x.red { background: linear-gradient(#e09080, #c83c28 50%, #b02010 52%, #d86040); }
.client { flex: 1; min-height: 0; display: flex; flex-direction: column; background: #000; border: 1px solid #000; }
.list { background: var(--te); border: 2px solid; border-color: var(--ted) var(--tel) var(--tel) var(--ted); padding: 3px 2px; white-space: pre; overflow: hidden; }
.list.cy { background: var(--cy); border-color: var(--cyd) var(--cyl) var(--cyl) var(--cyd); padding: 3px; }
.list li { height: 18px; line-height: 15px; }
.list .sel { color: var(--te); background: linear-gradient(#000, #000) 0 0 / 100% 15px no-repeat; }
.cy .sel { color: var(--cy); }
.vs, .hs { flex: none; display: flex; background: #83b9ba; border: 2px solid; border-color: var(--cyd) var(--cyl) var(--cyl) var(--cyd); }
.vs { flex-direction: column; width: 14px; }
.hs { height: 14px; }
.vs svg, .hs svg { width: 10px; height: 10px; }
.vs i, .hs i { flex: 1; background: var(--cy); border: 2px solid; border-color: var(--cyl) var(--cyd) var(--cyd) var(--cyl); }
.vs i { margin: 1px 0; } .hs i { margin: 0 1px; }
.teal { background: #45a790; border-color: var(--ted) var(--tel) var(--tel) var(--ted); }
.teal i { background: var(--te); border-color: var(--tel) var(--ted) var(--ted) var(--tel); }
.ib { width: 30px; height: 30px; }
.ib svg { width: 24px; height: 24px; }
.opt { display: flex; align-items: center; }
.opt select { flex: 1; width: 0; }
.closebar { flex: none; height: 28px; padding: 3px 2px 2px; background: var(--cy); border-top: 1px solid #000; display: flex; }
.closebar .raised { flex: 1; border-width: 2px; }

/* checklist */
.checklist { left: 1382px; top: 96px; width: 398px; height: 725px; }
.checklist > header { height: 26px; padding-top: 5px; padding-left: 6px; background: linear-gradient(90deg, rgba(130,130,125,.9), rgba(70,70,68,.95) 27%, #000 45%, #0a0a0a 75%, #555 96%, #c9c9c4); margin: 0 -6px; border-radius: 5px 5px 0 0; }
.checklist .x { right: 5px; }
.cmenu { flex: none; height: 36px; background: var(--cy); border-bottom: 1px solid #000; display: flex; }
.cmenu .raised { width: 137px; display: flex; gap: 16px; padding-left: 12px; border-width: 2px; box-shadow: 1px 0 0 #000; font: bold 15px/20px var(--serif); }
.checklist h2 { flex: none; height: 21px; text-align: center; background: var(--cy); border-bottom: 1px solid #000; font: bold 15px/20px var(--serif); }
.cscroll { flex: 1; min-height: 0; display: flex; justify-content: space-between; background: var(--te); padding: 2px 1px 2px 1px; }
.items { width: 358px; overflow: hidden; background: #000; padding: 1px; border-right: 2px solid var(--tel); border-left: 1px solid #000; }
.items article { height: 116px; margin-bottom: 3px; background: var(--cy); display: flex; flex-direction: column; }
.r1 { display: flex; align-items: center; height: 38px; padding: 1px 3px 2px 4px; flex: none; }
.r1 > input[type=checkbox] { width: 14px; height: 14px; margin: 0 17px 14px 0; border: 1px solid; border-color: var(--cyd) var(--cyl) var(--cyl) var(--cyd); }
.r1 > input[type=checkbox]::after { content: "✓"; color: #c01050; font: bold 15px/12px "DejaVu Sans", sans-serif; display: block; }
.r1 strong { font: bold 15px/18px var(--serif); margin-left: 5px; flex: 1; overflow: hidden; height: 18px; }
.r1 .raised { width: 44px; height: 31px; font-weight: 400; border-width: 2px; }
.sunk { width: 104px; height: 31px; margin: 0 4px; padding: 0 4px 10px; font-weight: 400; border: 2px solid; border-color: var(--cyd) var(--cyl) var(--cyl) var(--cyd); }
.r1 .q { width: 29px; padding: 0; }
.q b { width: 22px; height: 22px; border: 1px solid #000; font: bold 20px/20px "DejaVu Sans Mono", monospace; }
.r2 { display: flex; gap: 3px; padding: 0 2px; height: 24px; flex: none; }
.r2 button { flex: 1; border-width: 2px; font: bold 15px/18px var(--serif); }
.r3 { display: flex; align-items: center; gap: 5px; height: 37px; padding-left: 2px; flex: none; }
.r3 .raised { width: 29px; height: 29px; border-width: 2px; }
.r3 svg { width: 24px; height: 24px; }
.r3 .rd svg { outline: 2px solid #d02020; outline-offset: -3px; }
.r3 p { flex: 1; text-align: center; font-weight: 400; line-height: 15px; white-space: nowrap; padding-right: 34px; }
.st { width: 17px; height: 33px; background: var(--red); border: 1px solid #000; font: bold 13px/30px var(--serif); text-align: center; margin-left: -2px; }
.st.ok { background: var(--green); }
.r4 { flex: 1; min-height: 0; line-height: 17px; background: var(--cream); border-top: 1px solid #000; font-weight: 400; padding-left: 2px; }
.part i { flex: none; height: 478px; } .part s { flex: 1; }

/* histogram */
.histo { left: 1242px; top: 315px; width: 481px; height: 575px; padding-bottom: 6px; border-color: #d5efc0; }
.histo > header { margin: 0 -6px; padding-left: 6px; padding-top: 5px; background: linear-gradient(90deg, rgba(160,220,90,.3), rgba(190,225,150,.35) 29%, rgba(225,250,240,.35) 31%, rgba(225,250,240,.5)); }
.histo .x { right: 5px; border-color: #888; }
.histo .client { background: var(--te); }
.histo .closebar { padding: 4px 2px 1px; }
.hmain { display: flex; gap: 2px; padding: 5px 5px 0 2px; height: 292px; flex: none; }
.hleft { width: 104px; background: var(--cy); border: 1px solid #000; }
fieldset { margin: 0; border: 0; padding: 0 0 0 6px; height: 136px; border-bottom: 1px solid #000; border-right: 1px solid #000; }
fieldset label { display: flex; align-items: center; gap: 6px; height: 27px; }
fieldset input { width: 10px; height: 10px; margin: 0 0 0 3px; rotate: 45deg; border: 2px solid; border-color: var(--cyl) var(--cyd) var(--cyd) var(--cyl); }
fieldset input:checked { background: #c8104c; border-color: var(--cyd) var(--cyl) var(--cyl) var(--cyd); }
.hlist { display: flex; justify-content: space-between; height: 114px; padding: 0 1px 0 1px; }
.hlist .list { width: 82px; }
.btns { display: flex; gap: 5px; padding: 2px; }
.hright { flex: 1; background: var(--cy); border: 1px solid #000; box-shadow: 1px 1px 0 #000; display: flex; flex-direction: column; align-items: center; }
h3 { margin-top: 3px; width: 205px; height: 22px; font-style: italic; text-align: center; background: #b4ffff; border: 1px solid #000; box-shadow: 2px 2px 0 #777; white-space: nowrap; line-height: 24px; flex: none; }
.bars { flex: none; width: 100%; height: 142px; display: flex; align-items: flex-end; padding-left: 5px; border-bottom: 4px solid #000; }
.bars div { width: 55px; display: flex; flex-direction: column; align-items: center; }
.bars span { color: #d01818; line-height: 14px; }
.bars i { width: 56px; background: var(--red); border: 1px solid #000; border-bottom: 0; }
.axis { width: 100%; padding: 1px 0 0 5px; display: flex; height: 38px; flex: none; }
.axis span { width: 56px; margin-right: -1px; height: 29px; padding-top: 2px; background: var(--red); border: 1px solid #000; text-align: center; line-height: 15px; }
.hright .hs { width: 350px; }
.hlow { flex: 1; min-height: 0; width: 100%; display: flex; border-top: 1px solid #000; gap: 4px; padding-left: 1px; }
.hlow .list { width: 83px; }
.reso { flex: 1; margin-left: -3px; border: 2px solid #000; border-left-width: 1px; padding: 1px 3px; display: flex; flex-direction: column; }
.reso label { text-align: center; }
.reso output { padding: 4px 0 0 3px; line-height: 20px; }
.reso input { height: 14px; background: #83b9ba; border: 2px solid; border-color: var(--cyd) var(--cyl) var(--cyl) var(--cyd); }
.reso input::-webkit-slider-thumb { appearance: none; width: 28px; height: 10px; background: linear-gradient(90deg, transparent 13px, var(--cyd) 13px 14px, var(--cyl) 14px 15px, transparent 15px) var(--cy); border: 1px solid; border-color: var(--cyl) var(--cyd) var(--cyd) var(--cyl); }
.sash { height: 9px; flex: none; display: flex; justify-content: flex-end; padding-right: 11px; background: linear-gradient(var(--te) 4px, var(--ted) 4px 5px, var(--tel) 5px 6px, var(--te) 6px); }
.sash i { width: 10px; background: var(--te); border: 2px solid; border-color: var(--tel) var(--ted) var(--ted) var(--tel); }
.map { flex: none; height: 162px; margin: 0 5px; border: 1px solid #000; outline: 2px solid var(--ted); display: grid; place-items: center; }
.map svg { width: 257px; height: 121px; }
.hfoot { flex: 1; display: flex; gap: 4px; padding: 5px 5px 3px; align-items: stretch; }
.hfoot .ib { height: auto; }
.info { flex: 1; background: var(--cy); border: 1px solid #000; margin: -1px -2px 0; padding-left: 3px; display: flex; align-items: center; }
.pic { width: 38px; }
.pic svg { width: 31px; height: 32px; }

/* results viewer */
.viewer { left: 10px; top: 438px; width: 509px; height: 602px; padding-bottom: 6px; }
.viewer > header { margin: 0 -6px; padding-left: 6px; padding-top: 5px; background: linear-gradient(90deg, rgba(150,150,145,.5), rgba(190,205,198,.6) 20%, rgba(150,200,180,.6) 30%, rgba(15,15,15,.95) 31%, rgba(15,12,10,.95) 60%, rgba(90,90,88,.95) 85%, rgba(120,120,118,.95)); }
.viewer .x { right: 5px; }
.vtitle { flex: none; height: 28px; padding: 2px; background: var(--cyl); }
.vtitle button { width: 100%; height: 23px; font: bold 15px/18px var(--serif); }
.vbody { flex: 1; min-height: 0; display: flex; gap: 2px; padding-top: 2px; }
.vleft { width: 169px; display: flex; flex-direction: column; background: var(--te); }
.vright { flex: 1; min-width: 0; display: flex; flex-direction: column; background: var(--te); }
.vhead { flex: none; height: 29px; display: flex; border-bottom: 1px solid #000; justify-content: space-between; padding: 1px 2px; }
.vhead .raised { font-style: italic; font-weight: 400; height: 26px; }
.vhead button:first-child { width: 45px; } .vhead button:last-child { width: 36px; }
.vhead em { flex: 1; margin: -1px 2px; background: var(--cy); border: solid #000; border-width: 0 2px; text-align: center; line-height: 29px; }
.two { flex: 1; min-height: 0; display: flex; justify-content: space-between; padding: 0 1px 2px; }
.two .vs { margin-bottom: 18px; }
.vleft .stackcol { width: 149px; } .vright .stackcol { width: 303px; }
.stackcol { display: flex; flex-direction: column; gap: 4px; }
.stackcol .list { flex: 1; }
.repl { flex: none; height: 34px; border: 1px solid #000; padding: 2px 2px 2px 5px; display: flex; }
.repl .opt { flex: 1; padding: 0 5px 0 3px; }
.chead { flex: none; height: 31px; display: flex; align-items: center; background: var(--cy); padding-right: 2px; }
.chead button { width: 207px; height: 29px; }
.chead label { width: 52px; padding-left: 2px; }
.chead .opt { flex: 1; height: 27px; padding: 0 3px 0 4px; border-width: 2px; }
.nav { flex: none; height: 26px; display: flex; gap: 4px; align-items: center; padding: 0 1px; }
.nav button { width: 44px; height: 24px; border-width: 2px; } .nav button:first-child { width: 53px; }
.nav label { width: 52px; }
.nav input { flex: 1; width: 0; height: 26px; padding: 0 5px 4px; border: 2px solid #fff; box-shadow: inset 2px 2px 0 var(--ted); }
.zoomrow { flex: none; height: 33px; display: flex; }
.az { width: 125px; border: 1px solid #000; padding: 1px 2px 1px 5px; display: flex; }
.az .opt { flex: 1; padding: 0 5px 0 3px; }
.sv { width: 96px; display: flex; border: 1px solid #000; background: var(--green); }
.sv label { width: 28px; background: var(--cy); line-height: 30px; }
.sv .opt { flex: 1; margin: 1px 1px 1px 5px; background: var(--green); padding-right: 4px; border-color: #8ff58f #1a9a3a #1a9a3a #8ff58f; }
.show { display: flex; gap: 4px; padding: 5px 0 0 4px; }
.show input { width: 13px; height: 13px; margin-top: 2px; border: 1px solid; border-color: var(--tel) var(--ted) var(--ted) var(--tel); }
.btns.end { justify-content: flex-end; gap: 4px; padding: 1px 2px 3px; flex: none; }
.ib.wide { width: 34px; } .ib.wide svg { width: 28px; }
.stat { flex: none; height: 21px; margin-top: 2px; background: var(--te); text-align: center; line-height: 20px; border-bottom: 2px solid #000; white-space: pre; }
.erf { flex: none; height: 20px; background: var(--cream); padding-left: 2px; line-height: 19px; border-bottom: 1px solid #000; }
.vfoot { flex: none; height: 33px; display: flex; gap: 4px; padding: 1px 2px; background: var(--cy); align-items: center; }
.vfoot .cl { flex: 1; height: 30px; }
.hotb { border-color: #f01818; }

/* taskbar */
.taskbar { flex: none; height: 40px; display: flex; align-items: center; gap: 4px; padding-left: 7px; border-top: 1px solid #999; background: linear-gradient(90deg, #6d675a, #57524a 130px, #857e70 300px, #7b7568 620px, #45413b 690px, #1c1b19 760px, #5c574d 880px, #4a463f 1000px, #262521 1180px, #1d1c1a); box-shadow: 0 -1px 0 #222; }
.start { width: 38px; margin-right: 11px; }
.tb { width: 58px; height: 38px; border: 1px solid #d0cab8; border-radius: 3px; background: linear-gradient(150deg, rgba(255,255,255,.3), rgba(60,55,50,.2) 45%, rgba(255,255,255,.2)); box-shadow: 0 0 0 1px #222; }
.flat { border: 0; background: none; box-shadow: none; }
.stack { border-right-width: 3px; }
.tb.hot { width: 51px; margin-right: 7px; background: linear-gradient(#fbd070, #f08a30); border-color: #ffe8b0; box-shadow: 0 0 0 1px #222, 5px 0 0 -1px #998; }
.tray { margin-left: auto; display: flex; align-items: center; height: 100%; color: #fff; }
.tray time { font: 12px/18px var(--ui); width: 84px; text-align: center; }
.peek { width: 14px; height: 38px; border: 1px solid #888; background: linear-gradient(#777, #333); }
```
